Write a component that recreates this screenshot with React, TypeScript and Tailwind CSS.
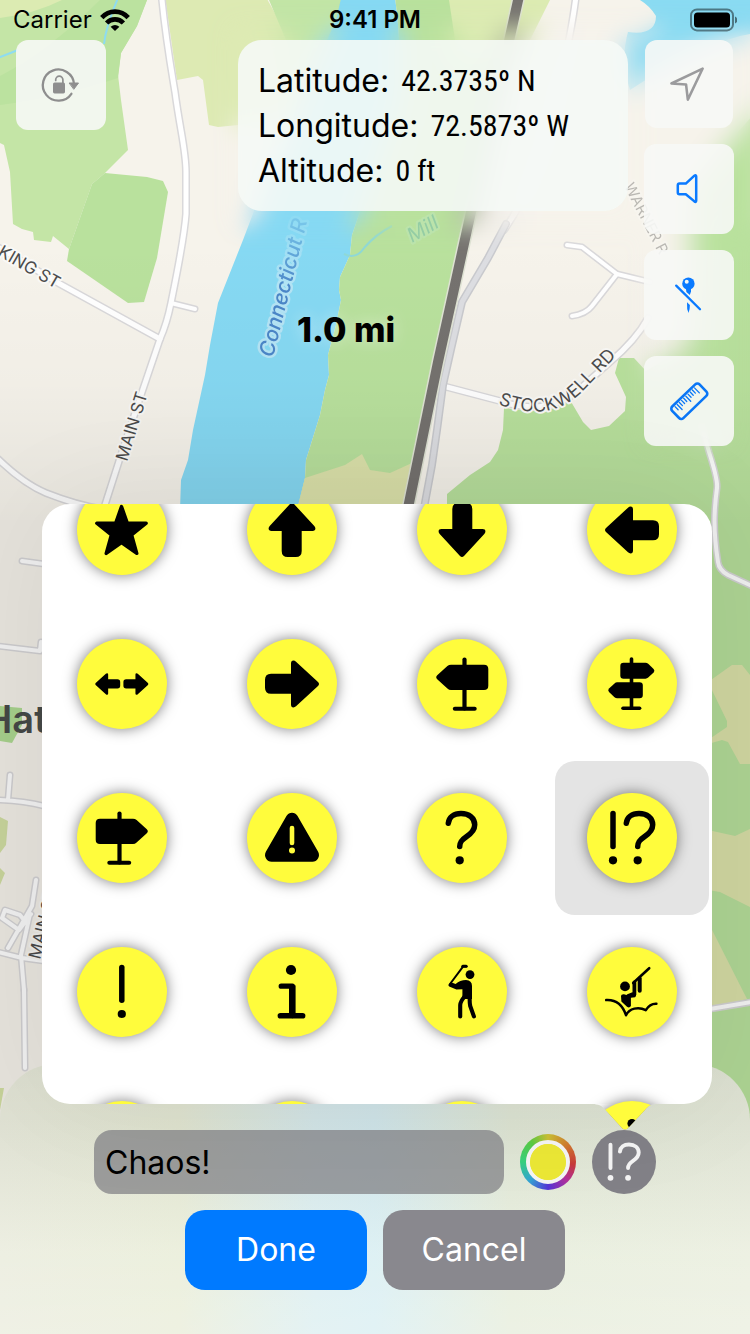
import React, { useState } from "react";

const ARROW =
  "M24 34.7H44V24.5Q44 21.6 46.4 21.6Q47.8 21.6 49 22.7L71 43Q73 45 71 47L49 67.3Q47.8 68.4 46.4 68.4Q44 68.4 44 65.5V54.7H24Q18 54.7 18 48.7V40.7Q18 34.7 24 34.7Z";

const QUESTION =
  "M31.3 30.3C31.8 24.2 37 20.5 44 20.5C52 20.5 57.7 25 57.7 31.8C57.7 37.6 54 40.8 49.2 43.8C44.6 46.8 42.7 49 42.7 53.6";

function Sign() {
  return (
    <g>
      <path d="M47.5 20.5V69.5" stroke="currentColor" strokeWidth="4.2" strokeLinecap="round" />
      <path d="M37.8 69.7H57.7" stroke="currentColor" strokeWidth="4" strokeLinecap="round" />
      <path d="M34 25.7H67Q71.3 25.7 71.3 30V46.7Q71.3 51 67 51H34Q32 51 30.4 49.5L20.2 40.3Q18.2 38.3 20.2 36.3L30.4 27.1Q32 25.7 34 25.7Z" />
    </g>
  );
}

const GLYPHS: Record<string, React.ReactNode> = {
  Star: (
    <path
      d="M44.5 21.5L50.4 38.2H69.2L54.6 49.8L59.8 68.4L44.5 57.6L29.2 68.4L34.4 49.8L19.8 38.2H38.6Z"
      stroke="currentColor"
      strokeWidth="3.4"
      strokeLinejoin="round"
    />
  ),
  "Arrow up": <path d={ARROW} transform="rotate(-90 45 45)" />,
  "Arrow down": <path d={ARROW} transform="rotate(90 45 45)" />,
  "Arrow left": <path d={ARROW} transform="rotate(180 45 45)" />,
  "Arrows left and right": (
    <g>
      <path d={ARROW} transform="translate(46.4 45) scale(.463) translate(-18 -45)" />
      <path d={ARROW} transform="translate(43.2 45) scale(-.463 .463) translate(-18 -45)" />
    </g>
  ),
  "Arrow right": <path d={ARROW} />,
  "Signpost left": <Sign />,
  Signpost: (
    <g>
      <path d="M44.5 20V69" stroke="currentColor" strokeWidth="3.6" strokeLinecap="round" />
      <path d="M36 69.2H52.6" stroke="currentColor" strokeWidth="3.6" strokeLinecap="round" />
      <path d="M36.5 23.7H58.5Q60 23.7 61.2 24.8L66.6 30Q68.2 31.7 66.6 33.4L61.2 38.6Q60 39.7 58.5 39.7H36.5Q33.3 39.7 33.3 36.5V26.9Q33.3 23.7 36.5 23.7Z" />
      <path d="M52.6 43.3H30.2Q28.7 43.3 27.5 44.4L22 49.6Q20.4 51.3 22 53L27.5 58.2Q28.7 59.3 30.2 59.3H52.6Q55.8 59.3 55.8 56.1V46.5Q55.8 43.3 52.6 43.3Z" />
    </g>
  ),
  "Signpost right": (
    <g transform="translate(90 0) scale(-1 1)">
      <Sign />
    </g>
  ),
  Warning: (
    <g>
      <path d="M39.6 22.8Q41.6 19.7 45 19.7Q48.4 19.7 50.4 22.8L71 58.6Q73 62.4 71 65.5Q69 68.7 65.4 68.7H24.6Q21 68.7 19 65.5Q17 62.4 19 58.6Z" />
      <path d="M45 35V50" stroke="#fffc3c" strokeWidth="4.6" strokeLinecap="round" />
      <circle cx="45" cy="57.6" r="3" fill="#fffc3c" />
    </g>
  ),
  Question: (
    <g>
      <path d={QUESTION} fill="none" stroke="currentColor" strokeWidth="5.5" strokeLinecap="round" />
      <circle cx="42.7" cy="67.3" r="4.1" />
    </g>
  ),
  "Exclamation and question": (
    <g>
      <path d="M26 20.6V53.4" stroke="currentColor" strokeWidth="5.5" strokeLinecap="round" />
      <circle cx="26" cy="67.3" r="4.1" />
      <g transform="translate(8 0)">
        <path d={QUESTION} fill="none" stroke="currentColor" strokeWidth="5.5" strokeLinecap="round" />
        <circle cx="42.7" cy="67.3" r="4.1" />
      </g>
    </g>
  ),
  Exclamation: (
    <g>
      <path d="M44.8 20.6V53.2" stroke="currentColor" strokeWidth="5.5" strokeLinecap="round" />
      <circle cx="44.8" cy="67" r="4.1" />
    </g>
  ),
  Information: (
    <g>
      <circle cx="44" cy="23" r="5.1" />
      <path d="M34.2 39.2H45.4V68.6" fill="none" stroke="currentColor" strokeWidth="5.2" strokeLinecap="round" strokeLinejoin="round" />
      <path d="M45.3 38.4V68" stroke="currentColor" strokeWidth="6.6" />
      <path d="M33.4 68.8H55.6" stroke="currentColor" strokeWidth="5.6" strokeLinecap="round" />
    </g>
  ),
  Golfer: (
    <g>
      <circle cx="53" cy="27.6" r="4.4" />
      <path d="M49.2 19.4H46.2L33 37" fill="none" stroke="currentColor" strokeWidth="2" strokeLinecap="round" strokeLinejoin="round" />
      <path d="M49.2 19.2H45.8" stroke="currentColor" strokeWidth="3" strokeLinecap="round" />
      <path d="M31.6 37.2L34 35.2L38.6 37C41.6 34.4 45 33.1 49 33.1Q55 33.5 55 39V52H45.4V42.2L39.4 42.4L32.2 39.4Q31 38.6 31.6 37.2Z" />
      <path d="M47.6 49.5Q43.4 54.5 43.2 58V69.4M52.8 49.5Q52.4 55 53.2 59L56.9 69.4" fill="none" stroke="currentColor" strokeWidth="4.1" strokeLinecap="round" />
    </g>
  ),
  "Rope swing": (
    <g fill="none" stroke="currentColor" strokeLinecap="round">
      <circle cx="38" cy="39.4" r="4.9" fill="currentColor" stroke="none" />
      <path d="M62.2 21.2L46.2 36" strokeWidth="2.6" />
      <path d="M52.7 31.5V43.8" strokeWidth="4" />
      <path d="M47.4 35.5V46.6L41 49" strokeWidth="3.8" />
      <path d="M34 49Q34 47 37 47.2L41 48.6L49 46.4V49Q48.6 50.6 46 50.6L43.9 50.8V59Q42.5 61.4 40 59.8L34.4 54.4Z" fill="currentColor" stroke="none" />
      <path d="M19.2 53.1C28 52.6 35.4 57.4 39 68.2C42.4 61.4 51.4 59.2 58.8 63.2C61.6 58.6 65 56.6 69.4 56.8" strokeWidth="2.5" strokeLinejoin="round" />
    </g>
  ),
  "Marker a": null,
  "Marker b": null,
  "Marker c": null,
  "Marker d": <circle cx="45" cy="26" r="4.6" />,
};

function Glyph({ name, className }: { name: string; className: string }) {
  return (
    <svg viewBox="0 0 90 90" className={className} fill="currentColor" aria-hidden="true">
      {GLYPHS[name]}
    </svg>
  );
}

function Roads() {
  const paths: [string, number][] = [
    ["M162 0C166 40 170 62 175 92C180 130 186 150 186 172V214C184 240 178 268 171 303C168 318 164 330 160 339L140 398L120 458L104 508", 5],
    ["M-4 246L60 284L160 339", 5],
    ["M171 303L195 309", 4],
    ["M-2 459Q24 484 46 493Q76 505 106 510", 5],
    ["M567 245L582 247L617 274L650 282", 4],
    ["M617 274L592 306Q586 314 572 316", 4],
    ["M443 386L500 401Q545 416 575 393L610 362Q636 340 648 318", 5],
    ["M700 420L709 452Q718 480 717 488C714 510 713 530 718 562Q719 570 728 575L752 586", 4],
    ["M710 1009L752 1002", 4],
    ["M22 561L44 564", 4],
    ["M-2 646L40 651L41 642", 4],
    ["M10 775L8 800M-2 800Q24 801 44 806", 4],
    ["M36 880L32 906L8 948M30 914L21 955L24 990M-2 952L22 958L44 961M2 918L5 910L20 915L24 920M2 918L19 930L31 914", 4],
    ["M24 990L25 1068", 4],
    ["M576 -4Q572 30 560 80Q540 180 504 230", 5],
  ];
  return (
    <g fill="none" strokeLinecap="round" strokeLinejoin="round">
      {paths.map(([d, w], i) => (
        <path key={i} d={d} stroke="#d9d8da" strokeWidth={w + 3} />
      ))}
      {paths.map(([d, w], i) => (
        <path key={i} d={d} stroke="#ffffff" strokeWidth={w} />
      ))}
      <path d="M506 224L488 258L462 302L452 345L443 385L437 430L432 465L424 508" stroke="#c9cace" strokeWidth="8" />
      <path d="M506 224L488 258L462 302L452 345L443 385L437 430L432 465L424 508" stroke="#dddee2" strokeWidth="5" />
      <path d="M519 -4L467 230L438 362L408 508" stroke="#dfe3d4" strokeWidth="13" />
      <path d="M519 -4L467 230L438 362L408 508" stroke="#75726f" strokeWidth="10" />
    </g>
  );
}

function MapBackground() {
  return (
    <svg
      viewBox="0 0 750 1334"
      preserveAspectRatio="xMidYMid slice"
      className="absolute inset-0 h-full w-full"
      role="img"
      aria-label="Map"
    >
      <defs>
        <g id="terrain">
          <rect x="-40" y="-40" width="830" height="1420" fill="#f6f3eb" />
          <path d="M0 0H147L137 26L121 53L118 75L121 100L128 150L105 173L92 184L69 249L53 236L51 242L34 240L33 232L22 229L13 224L10 172L4 145L0 143Z" fill="#c4e5a6" />
          <path d="M147 0L137 26L121 53L118 78Q60 98 0 105V76Q50 50 100 0Z" fill="#bbe29f" />
          <path d="M0 0H62Q34 14 0 18Z" fill="#dcebb2" />
          <path d="M118 -2Q106 26 104 44M-2 58Q8 54 18 50" stroke="#8edcf0" strokeWidth="2" fill="none" />
          <path d="M105 173L147 177L163 181L168 192L157 258L144 302L128 303L67 261L69 249L92 184Z" fill="#b9e19d" />
          <path d="M164 -10H262L290 40L300 120L238 125L218 127L209 125L203 80L198 76L177 80Z" fill="#ddeab3" />
          <path d="M252 -40H360L336 60L300 120L286 40Z" fill="#c2e5a6" />
          <path d="M350 -40H388Q404 30 398 100L352 235L350 255L340 277L339 290L341 300L336 325L328 355L329 375L325 390L320 415L306 460L305 478L297 510H180L181 480L188 460L193 430L205 375L210 345L218 303L243 240L262 190Q300 100 336 20Z" fill="#86d9f3" />
          <path d="M388 -40H527L467 230L438 362L408 510H297L305 478L306 460L320 415L325 390L329 375L328 355L336 325L341 300L339 290L340 277L350 255L352 235L398 100Q404 30 388 -40Z" fill="#b9e19d" />
          <path d="M446 -20H560L520 60H458Z" fill="#dcebb2" />
          <path d="M297 510L305 478L345 465L362 454L370 470L390 473L412 463L418 459L408 510Z" fill="#dde3ab" />
          <path d="M650 -20H770V30L740 36Q690 50 630 90Q620 60 628 32Q656 36 656 16Q650 6 640 0Z" fill="#8adbf2" />
          <path d="M770 96L728 143L690 190V345L646 371L634 358L619 358L615 373L626 397L625 411L609 426L591 430L583 422L570 400L545 412L504 408L503 430L498 450L490 462L470 475L447 494V510L430 1334H770Z" fill="#b9e19d" />
          <path d="M708 682L732 665H742L750 675V764H740L728 742L722 740L708 744V740L727 727V721L708 682Z" fill="#dde3ab" />
          <path d="M708 830L735 836L752 828V908L720 892L708 890Z" fill="#dde3ab" />
          <path d="M708 922L747 999L708 1008Z" fill="#dde3ab" />
          <path d="M0 706L22 708V725L12 743L0 741Z" fill="#b0dc94" />
          <path d="M0 817L8 821L6 845L0 853ZM0 868L5 873L0 885ZM0 1088H4L0 1110Z" fill="#d3e0a4" />
          <path d="M344 254Q356 260 364 248Q376 234 392 226" stroke="#8fd8d6" strokeWidth="2" fill="none" />
          <Roads />
        </g>
        <filter id="soft" x="-10%" y="-10%" width="120%" height="120%">
          <feGaussianBlur stdDeviation="14" />
        </filter>
        <filter id="edge" x="-30%" y="-30%" width="160%" height="160%">
          <feGaussianBlur stdDeviation="11" />
        </filter>
        <mask id="halo" maskUnits="userSpaceOnUse" x="0" y="0" width="750" height="1334">
          <g filter="url(#edge)" fill="#fff">
            <rect x="232" y="26" width="402" height="202" />
            <rect x="640" y="26" width="120" height="200" />
            <rect x="646" y="200" width="84" height="244" />
          </g>
        </mask>
        <linearGradient id="fade" x1="0" y1="360" x2="0" y2="215" gradientUnits="userSpaceOnUse">
          <stop offset="0.5" stopColor="#fff" />
          <stop offset="1" stopColor="#fff" stopOpacity="0.15" />
        </linearGradient>
        <mask id="labelFade" maskUnits="userSpaceOnUse" x="0" y="0" width="750" height="1334">
          <rect width="750" height="1334" fill="url(#fade)" />
        </mask>
        <path id="stockwell" d="M498 404Q549 424 582 392L626 346" />
        <linearGradient id="shadeTop" x1="0" y1="0" x2="0" y2="1">
          <stop offset="0" stopOpacity="0" />
          <stop offset="0.5" stopOpacity="0.02" />
          <stop offset="1" stopOpacity="0.07" />
        </linearGradient>
      </defs>
      <use href="#terrain" />
      <g mask="url(#halo)">
        <use href="#terrain" filter="url(#soft)" />
      </g>
      <g
        fontFamily="Inter, 'Liberation Sans', sans-serif"
        fontSize="17"
        fill="#4c4c4c"
        stroke="#faf9f6"
        strokeWidth="4"
        strokeLinejoin="round"
        paintOrder="stroke"
      >
        <text transform="translate(-3 255) rotate(30)">KING ST</text>
        <text transform="translate(127 462) rotate(-73)">MAIN ST</text>
        <text transform="translate(40 960) rotate(-76)">MAIN ST</text>
        <text fontSize="18">
          <textPath href="#stockwell">STOCKWELL RD</textPath>
        </text>
        <text transform="translate(624 186) rotate(63)" opacity="0.35" fontSize="15">WARNER R</text>
        <g mask="url(#labelFade)">
          <text transform="translate(273 358) rotate(-76)" fill="#4b86c8" stroke="#b5e4f5" strokeWidth="5" fontSize="21" fontWeight="500" fontStyle="italic">
            Connecticut R
          </text>
        </g>
        <text transform="translate(412 243) rotate(-30)" fill="#5fb0b0" stroke="#c0e8c0" opacity="0.4" fontSize="20" fontStyle="italic">Mill</text>
      </g>
      <text x="-16" y="733" fontFamily="Inter, 'Liberation Sans', sans-serif" fontSize="38" fontWeight="600" fill="#4a4d4b">
        Hatfield
      </text>
      <rect y="240" width="750" height="280" fill="url(#shadeTop)" />
      <rect y="520" width="750" height="814" fillOpacity="0.07" />
    </svg>
  );
}

function StatusBar() {
  return (
    <div className="grid h-10 grid-cols-3 items-center px-[13px] text-2xl leading-10 text-black">
      <div className="flex items-center gap-2">
        <span>Carrier</span>
        <svg viewBox="0 0 30 22" className="h-[22px] w-[30px]" aria-label="Wi-Fi" role="img">
          <g fill="none" stroke="#000" strokeWidth="4.6">
            <path d="M1.8 8.6C9 .6 21 .6 28.2 8.6" />
            <path d="M6.6 14C11.2 9.2 18.8 9.2 23.4 14" />
          </g>
          <path d="M10.6 17.8Q15 14 19.4 17.8L15 22Z" />
        </svg>
      </div>
      <span className="text-center font-semibold">9:41 PM</span>
      <svg viewBox="0 0 48 24" className="h-6 w-12 justify-self-end" aria-label="Battery full" role="img">
        <rect x="2" y="1.4" width="42" height="21" rx="6" fill="none" stroke="#000" strokeOpacity="0.45" strokeWidth="2" />
        <rect x="5" y="4.4" width="36" height="15" rx="3.5" />
        <path d="M46 8.4Q48.4 9.6 48.4 12Q48.4 14.4 46 15.6Z" fillOpacity="0.5" />
      </svg>
    </div>
  );
}

function ToolButton({ label, className, children }: { label: string; className: string; children: React.ReactNode }) {
  return (
    <button type="button" aria-label={label} className={`rounded-xl bg-[#f7f8f6]/90 ${className}`}>
      <svg viewBox="0 0 90 90" className="h-full w-full" fill="none" stroke="currentColor" strokeLinecap="round" strokeLinejoin="round" aria-hidden="true">
        {children}
      </svg>
    </button>
  );
}

function Reading({ label, value }: { label: string; value: string }) {
  return (
    <div className="flex gap-3 leading-[45px]">
      <dt className="text-[32px]">{label}</dt>
      <dd className="font-['Roboto_Condensed','Liberation_Sans_Narrow',Roboto,sans-serif] text-[30px]">{value}</dd>
    </div>
  );
}

const TICKS = [-14, -11, -8, -5, -2, 1, 4, 7, 10, 13];

export default function App() {
  const [selected, setSelected] = useState("Exclamation and question");
  const [title, setTitle] = useState("Chaos!");
  const [color, setColor] = useState("#ebe735");

  return (
    <div className="relative flex min-h-screen flex-col overflow-hidden bg-[#f6f3eb] font-[Inter,'Liberation_Sans',sans-serif] text-black">
      <MapBackground />

      <header className="relative">
        <StatusBar />
        <div className="flex items-start justify-between px-4">
          <ToolButton label="Unlock rotation" className="size-[90px] text-[#8e8e8e]">
            <path d="M58 44A15.6 15.6 0 1 0 55.4 53.8" strokeWidth="2.3" />
            <path d="M53.5 43H62.5L58 49Z" fill="currentColor" strokeWidth="1" />
            <rect x="37" y="42.6" width="12" height="10.8" rx="1.6" fill="currentColor" stroke="none" />
            <path d="M39.7 40.4V39.8A3.6 3.6 0 0 1 46.9 39.8V43" strokeWidth="1.7" />
          </ToolButton>
          <div className="flex items-start gap-4">
            <dl className="w-[390px] rounded-3xl bg-[#f5f9f6]/90 px-5 py-[18px]">
              <Reading label="Latitude:" value="42.3735º N" />
              <Reading label="Longitude:" value="72.5873º W" />
              <Reading label="Altitude:" value="0 ft" />
            </dl>
            <div className="flex flex-col items-center gap-4">
              <ToolButton label="Follow location" className="size-[88px] text-[#9b9b9d]">
                <path d="M59 29.2L27 44.5L42 45.5L43.8 61Z" strokeWidth="2.6" />
              </ToolButton>
              <ToolButton label="Audio" className="size-[90px] text-[#0a7aff]">
                <path d="M35.5 39.6H41.8L50.4 31.7Q52.2 30.4 52.2 32.6V56.6Q52.2 58.8 50.4 57.4L41.8 50.3H35.5Q33.8 50.3 33.8 48.6V41.3Q33.8 39.6 35.5 39.6Z" strokeWidth="2.5" />
              </ToolButton>
              <ToolButton label="Hide markers" className="size-[90px] text-[#0a7aff]">
                <g fill="currentColor" stroke="none">
                  <circle cx="44.4" cy="33.7" r="6.2" />
                  <path d="M41.8 38H47V41.5L45.8 45L42.4 42Z" />
                  <path d="M43 52.3L45.9 55L45.6 59L44.5 63L43.2 59Z" />
                </g>
                <circle cx="42.7" cy="31.8" r="2" fill="#f4f7f3" stroke="none" />
                <path d="M32.2 35.6L56 59.2" strokeWidth="2.3" />
              </ToolButton>
              <ToolButton label="Measure" className="size-[90px] text-[#0a76f6]">
                <g transform="translate(45.3 45.2) rotate(-44)">
                  <rect x="-19" y="-8" width="38" height="16" rx="3" strokeWidth="2.6" />
                  {TICKS.map((x, i) => (
                    <path key={x} d={i % 4 === 1 ? `M${x} -6V1` : `M${x} -6V-1.6`} strokeWidth="1.3" />
                  ))}
                </g>
              </ToolButton>
            </div>
          </div>
        </div>
      </header>

      <p className="absolute top-[308px] left-[297px] text-[34px] leading-[44px] font-extrabold [text-shadow:0_0_16px_rgba(255,255,255,0.45)]">
        1.0 mi
      </p>

      <section aria-label="Marker icons" className="relative z-10 mt-auto mr-[38px] ml-[42px] rounded-[28px] shadow-[0_0_120px_rgba(0,0,0,0.06)]">
        <div className="h-[600px] overflow-hidden rounded-[28px] bg-white">
          <div className="-mt-[51px] grid grid-cols-4 gap-x-4 px-[3px]">
            {Object.keys(GLYPHS).map((name) => (
              <button
                key={name}
                type="button"
                aria-label={name}
                aria-pressed={selected === name}
                onClick={() => setSelected(name)}
                className={
                  selected === name
                    ? "flex h-[154px] items-center justify-center rounded-[20px] bg-[#e4e4e4]"
                    : "flex h-[154px] items-center justify-center rounded-[20px]"
                }
              >
                <span className="size-[90px] rounded-full bg-[#fffc3c] shadow-[0_0_14px_rgba(0,0,0,0.5)]">
                  <Glyph name={name} className="size-full" />
                </span>
              </button>
            ))}
          </div>
        </div>
        <svg viewBox="0 0 66 28" className="absolute top-full right-[54px] h-7 w-[66px]" aria-hidden="true">
          <defs>
            <clipPath id="tail">
              <path d="M0 0C7 0 10 2 13.5 6L29 23Q33 28 37 23L53 6C56 2 59 0 66 0Z" />
            </clipPath>
            <filter id="tailShadow" x="-30%" y="-30%" width="160%" height="160%">
              <feGaussianBlur stdDeviation="6" />
            </filter>
          </defs>
          <g clipPath="url(#tail)">
            <rect width="66" height="28" fill="#fff" />
            <circle cx="40" cy="42" r="45" opacity="0.5" filter="url(#tailShadow)" />
            <circle cx="40" cy="42" r="45" fill="#fffc3c" />
            <circle cx="40" cy="19.6" r="4.6" />
          </g>
        </svg>
      </section>

      <form
        onSubmit={(e) => e.preventDefault()}
        className="relative -mt-10 rounded-t-[56px] bg-[linear-gradient(90deg,#eaecdd_0%,#e9edd8_24%,#dbeef0_42%,#d8eef2_50%,#e6eddb_68%,#eaeede_100%)]"
      >
        <div className="flex flex-col items-center gap-4 rounded-t-[56px] bg-[linear-gradient(180deg,rgba(0,0,0,0.07)_0%,rgba(0,0,0,0.05)_20%,rgba(255,255,255,0.15)_70%,rgba(255,255,255,0.25)_100%)] px-4 pt-[66px] pb-11">
          <div className="flex items-center gap-4">
            <input
              aria-label="Marker title"
              value={title}
              onChange={(e) => setTitle(e.target.value)}
              className="h-16 w-[410px] rounded-[18px] bg-[#838387]/75 px-[11px] text-[32px] leading-10 outline-none"
            />
            <label className="flex size-14 items-center justify-center rounded-full bg-[conic-gradient(#cbc034,#d0782f_50deg,#c8393a_95deg,#b0309c_135deg,#5436d6_180deg,#34a4d2_225deg,#36d080_270deg,#5acb42_320deg,#cbc034)]">
              <input
                type="color"
                aria-label="Marker color"
                value={color}
                onChange={(e) => setColor(e.target.value)}
                className="size-11 appearance-none rounded-full border-4 border-[#f4f4f4] bg-[#ebe735] p-0 [&::-webkit-color-swatch]:rounded-full [&::-webkit-color-swatch]:border-0 [&::-webkit-color-swatch-wrapper]:p-0"
              />
            </label>
            <button type="button" aria-label="Choose icon" className="size-16 rounded-full bg-[#828187] text-[#f4f4f4]">
              <Glyph name={selected} className="size-full" />
            </button>
          </div>
          <div className="flex gap-4 text-[32px] leading-10 text-white">
            <button type="submit" className="h-20 w-[182px] rounded-[20px] bg-[#007aff]">
              Done
            </button>
            <button type="button" className="h-20 w-[182px] rounded-[20px] bg-[#89888e]">
              Cancel
            </button>
          </div>
        </div>
      </form>
    </div>
  );
}
